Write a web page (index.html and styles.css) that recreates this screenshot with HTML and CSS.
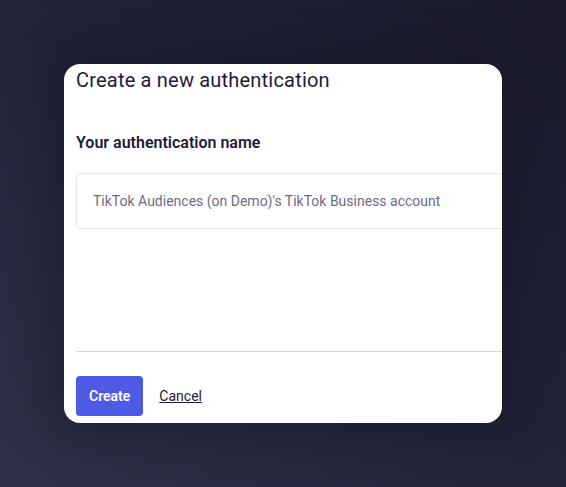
FILE: index.html
```html
<!DOCTYPE html>
<html lang="en">
<head>
<meta charset="utf-8">
<title>Create a new authentication</title>
<link rel="stylesheet" href="styles.css">
</head>
<body>
<div class="backdrop">
  <div class="modal">
    <div class="modal-inner">
      <h1 class="title">Create a new authentication</h1>
      <label class="label" for="auth-name">Your authentication name</label>
      <input class="field" id="auth-name" type="text" placeholder="TikTok Audiences (on Demo)'s TikTok Business account">
      <hr class="divider">
      <div class="actions">
        <button class="btn-primary" type="button">Create</button>
        <a class="link" href="#">Cancel</a>
      </div>
    </div>
  </div>
</div>
</body>
</html>
```
FILE: styles.css
```css
html, body {
  margin: 0;
  padding: 0;
  height: 100%;
}
body {
  font-family: Roboto, "Liberation Sans", sans-serif;
  background: linear-gradient(to bottom left, #1a1a2c 0%, #222339 50%, #2f3149 100%);
  overflow: hidden;
}
.backdrop {
  padding: 64px 0 0 64px;
}
.modal {
  width: 438px;
  height: 359px;
  background: #ffffff;
  border-radius: 16px;
  overflow: hidden;
  box-shadow: 0 0 40px 14px rgba(12, 12, 28, 0.3);
}
.modal-inner {
  width: 470px;
  padding: 4px 0 0 12px;
  display: flex;
  flex-direction: column;
}
.title {
  margin: 0;
  font-size: 20px;
  line-height: 24px;
  font-weight: 400;
  letter-spacing: 0.2px;
  color: #1d1b3b;
}
.label {
  margin-top: 41px;
  font-size: 16px;
  line-height: 20px;
  font-weight: 600;
  color: #1d1b3b;
}
.field {
  margin-top: 20px;
  box-sizing: border-box;
  height: 56px;
  width: 100%;
  padding: 0 16px;
  border: 1px solid #e6e6ea;
  border-radius: 4px;
  font-family: Roboto, "Liberation Sans", sans-serif;
  font-size: 14px;
  color: #1d1b3b;
  outline: none;
}
.field::placeholder {
  color: #6f6b86;
}
.divider {
  margin: 122px 0 0 0;
  border: 0;
  border-top: 1px solid #d6d6da;
  height: 0;
}
.actions {
  margin-top: 24px;
  display: flex;
  align-items: center;
  gap: 16px;
}
.btn-primary {
  height: 40px;
  padding: 0 13px;
  border: 0;
  border-radius: 4px;
  background: #4c5ae6;
  color: #ffffff;
  font-family: Roboto, "Liberation Sans", sans-serif;
  font-size: 14px;
  font-weight: 600;
}
.link {
  color: #1d1b3b;
  font-size: 14px;
  text-decoration: underline;
}
```
